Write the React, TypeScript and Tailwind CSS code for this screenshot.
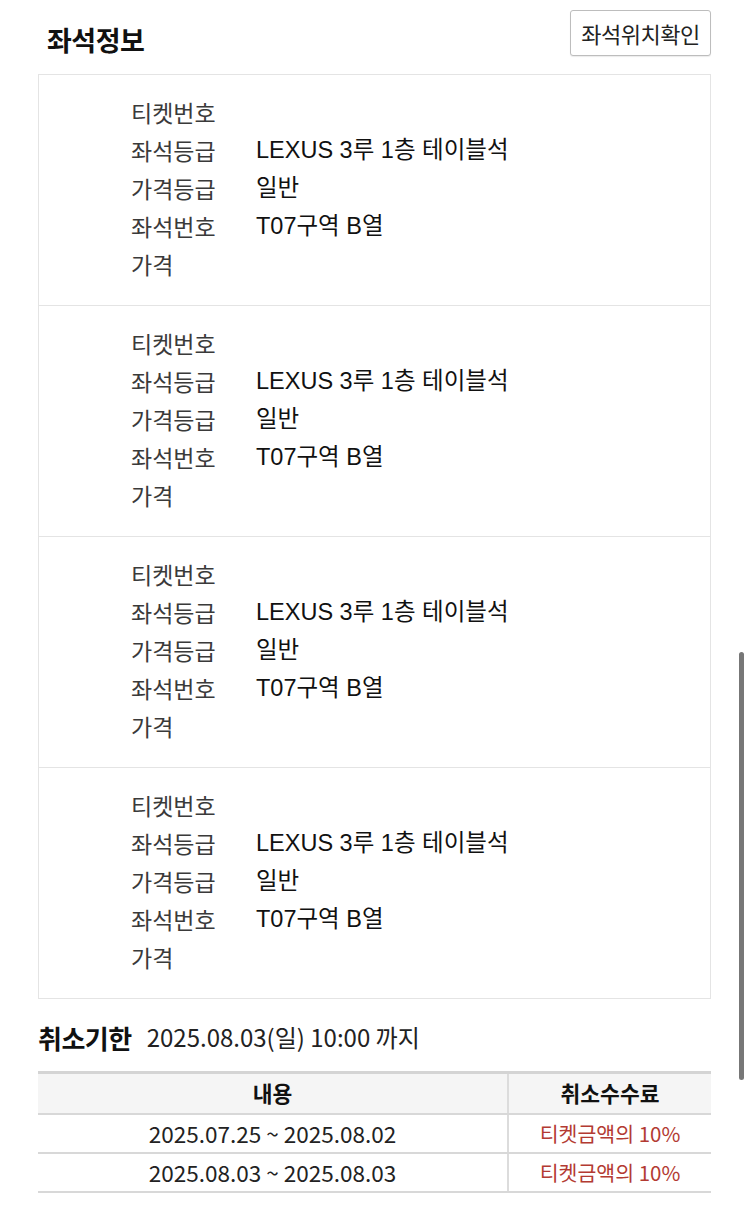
import React from "react";

const rows = [
  { label: "티켓번호", value: "" },
  { label: "좌석등급", value: "LEXUS 3루 1층 테이블석" },
  { label: "가격등급", value: "일반" },
  { label: "좌석번호", value: "T07구역 B열" },
  { label: "가격", value: "" },
];

function SeatCard({ last }: { last: boolean }) {
  return (
    <div className={`pt-[18px] pb-[22px] pl-[92px] ${last ? "" : "border-b border-[#e4e4e4]"}`}>
      {rows.map((r) => (
        <div key={r.label} className="flex h-[38px] items-center text-[23px]">
          <div className="w-[125px] text-[#3a3a3a]">{r.label}</div>
          <div
            className="pt-[2px] text-[23.5px] text-[#111]"
            style={{ fontFamily: '"Liberation Sans", "Noto Sans CJK KR", sans-serif' }}
          >
            {r.value}
          </div>
        </div>
      ))}
    </div>
  );
}

export default function App() {
  return (
    <div
      className="relative min-h-[1206px] w-[750px] bg-white text-[#111]"
      style={{ fontFamily: '"Noto Sans CJK KR", "Noto Sans", sans-serif' }}
    >
      <div className="ml-[38px] w-[673px]">
        <div className="flex h-[74px] items-start justify-between">
          <h1 className="mt-[20px] ml-[9px] text-[27px] font-bold leading-[40px] tracking-[-0.5px]">좌석정보</h1>
          <button className="mt-[10px] h-[46px] w-[141px] rounded-[3px] border border-[#bdbdbd] bg-white text-[22px] tracking-[-0.5px] text-[#222] shadow-[0_1px_1px_rgba(0,0,0,0.08)]">
            좌석위치확인
          </button>
        </div>

        <div className="border border-[#e4e4e4]">
          {[0, 1, 2, 3].map((i) => (
            <SeatCard key={i} last={i === 3} />
          ))}
        </div>

        <div className="mt-[19px] flex h-[38px] items-center">
          <span className="text-[26px] font-bold tracking-[-0.5px]">취소기한</span>
          <span className="ml-[15px] text-[24px] text-[#222]">2025.08.03(일) 10:00 까지</span>
        </div>

        <div className="mt-[15px] border-t-[3px] border-[#d4d4d4]">
          <div className="flex h-[41px] border-b-2 border-[#d8d8d8] bg-[#f5f5f5] text-[21.5px] font-bold">
            <div className="flex w-[471px] items-center justify-center border-r-2 border-[#dcdcdc]">내용</div>
            <div className="flex flex-1 items-center justify-center">취소수수료</div>
          </div>
          {[
            "2025.07.25 ~ 2025.08.02",
            "2025.08.03 ~ 2025.08.03",
          ].map((d) => (
            <div key={d} className="flex h-[39px] border-b-2 border-[#d8d8d8]">
              <div className="flex w-[471px] items-center justify-center border-r-2 border-[#dcdcdc] text-[22.5px] text-[#222]">{d}</div>
              <div className="flex flex-1 items-center justify-center text-[20.5px] text-[#b33a32]">티켓금액의 10%</div>
            </div>
          ))}
        </div>
      </div>

      <div className="absolute right-[6px] top-[652px] h-[428px] w-[5px] rounded-full bg-[#777]" />
    </div>
  );
}
